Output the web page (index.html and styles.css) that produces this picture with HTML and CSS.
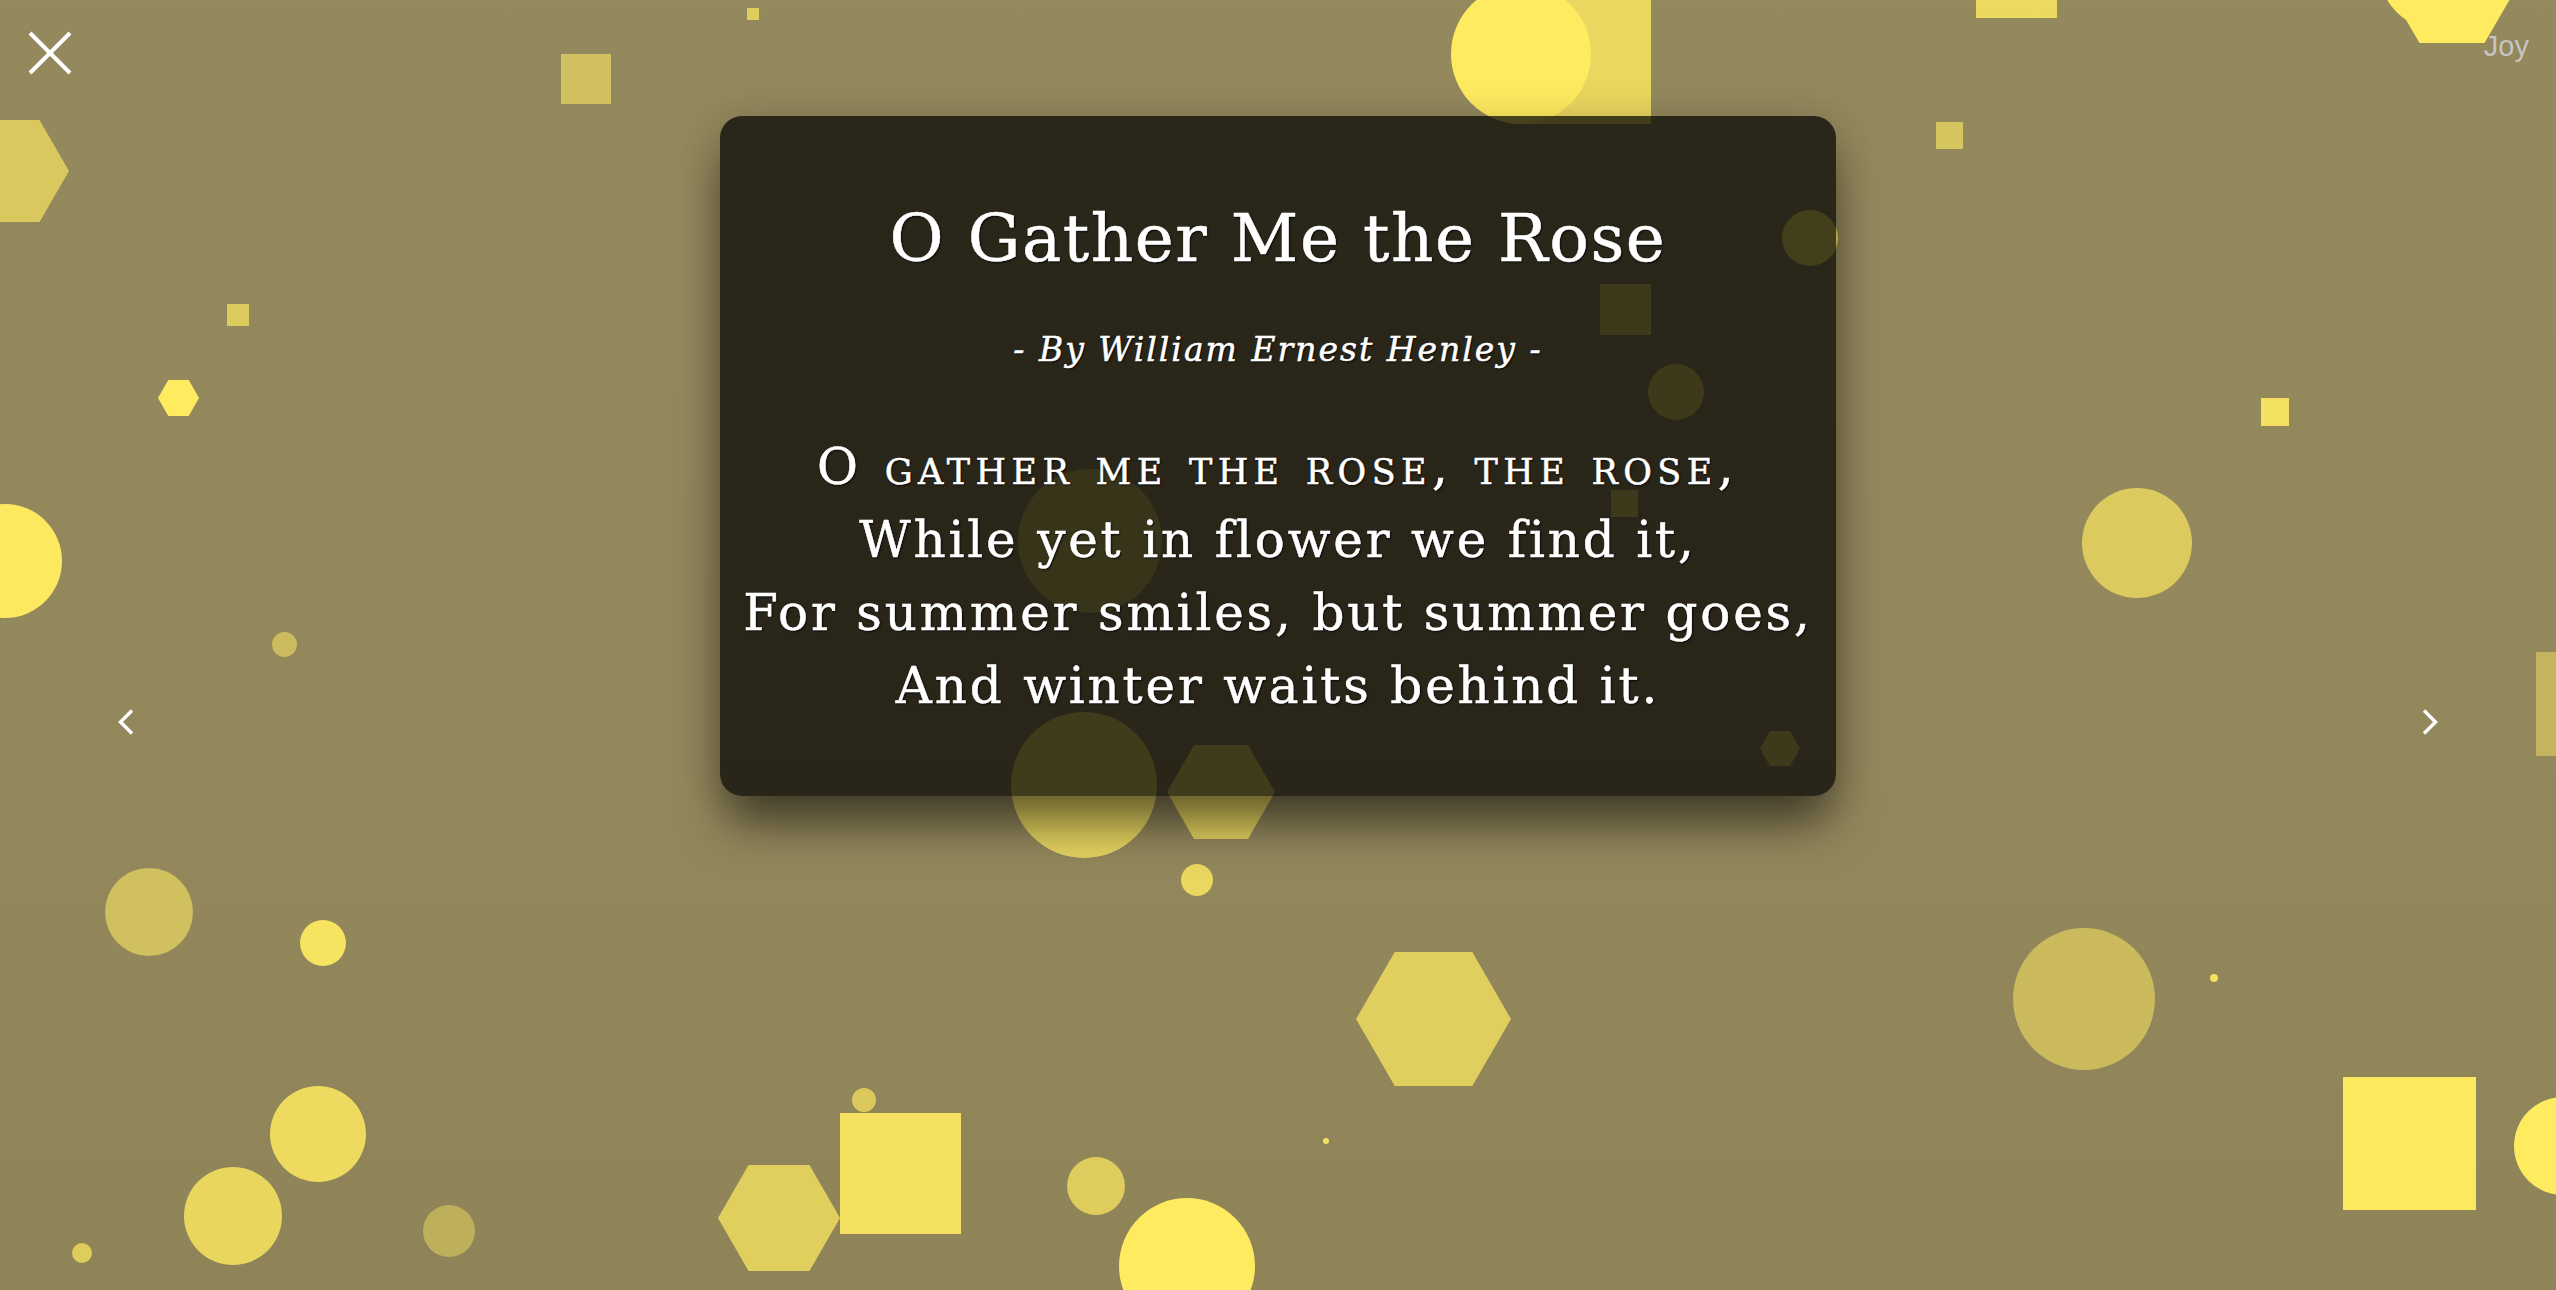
FILE: index.html
```html
<!DOCTYPE html>
<html lang="en">
<head>
<meta charset="utf-8">
<title>O Gather Me the Rose</title>
<link rel="stylesheet" href="styles.css">
</head>
<body>
<div class="stage">
  <div class="shapes" aria-hidden="true">
    <span class="shape circle c1"></span>
    <span class="shape circle c2"></span>
    <span class="shape circle c3"></span>
    <span class="shape circle c4"></span>
    <span class="shape circle c5"></span>
    <span class="shape circle c6"></span>
    <span class="shape circle c7"></span>
    <span class="shape circle c8"></span>
    <span class="shape circle c9"></span>
    <span class="shape circle c10"></span>
    <span class="shape circle c11"></span>
    <span class="shape circle c12"></span>
    <span class="shape circle c13"></span>
    <span class="shape circle c14"></span>
    <span class="shape circle c15"></span>
    <span class="shape circle c16"></span>
    <span class="shape circle c17"></span>
    <span class="shape circle c18"></span>
    <span class="shape circle c19"></span>
    <span class="shape circle c20"></span>
    <span class="shape circle c21"></span>
    <span class="shape circle c22"></span>
    <span class="shape circle c23"></span>
    <span class="shape square q1"></span>
    <span class="shape square q2"></span>
    <span class="shape square q3"></span>
    <span class="shape square q4"></span>
    <span class="shape square q5"></span>
    <span class="shape square q6"></span>
    <span class="shape square q7"></span>
    <span class="shape square q8"></span>
    <span class="shape square q9"></span>
    <span class="shape square q10"></span>
    <span class="shape square q11"></span>
    <span class="shape square q12"></span>
    <span class="shape hex h1"></span>
    <span class="shape hex h2"></span>
    <span class="shape hex h3"></span>
    <span class="shape hex h4"></span>
    <span class="shape hex h5"></span>
    <span class="shape hex h6"></span>
    <span class="shape hex h7"></span>
  </div>

  <button class="close" aria-label="Close">
    <svg width="44" height="44" viewBox="0 0 44 44"><path d="M2 2 L42 42 M42 2 L2 42" stroke="#fff" stroke-width="4" fill="none"/></svg>
  </button>
  <div class="mood">Joy</div>
  <button class="nav prev" aria-label="Previous">
    <svg width="18" height="26" viewBox="0 0 18 26"><path d="M15 1.5 L3.5 13 L15 24.5" stroke="#fff" stroke-width="3.4" fill="none"/></svg>
  </button>
  <button class="nav next" aria-label="Next">
    <svg width="18" height="26" viewBox="0 0 18 26"><path d="M3 1.5 L14.5 13 L3 24.5" stroke="#fff" stroke-width="3.4" fill="none"/></svg>
  </button>

  <main class="content">
    <article class="card">
      <h1 class="title">O Gather Me the Rose</h1>
      <p class="author">- By William Ernest Henley -</p>
      <div class="poem">
        <p class="line first">O gather me the rose, the rose,</p>
        <p class="line">While yet in flower we find it,</p>
        <p class="line">For summer smiles, but summer goes,</p>
        <p class="line">And winter waits behind it.</p>
      </div>
    </article>
  </main>
</div>
</body>
</html>
```

FILE: styles.css
```css
html, body {
  margin: 0;
  padding: 0;
  width: 100%;
  height: 100%;
  overflow: hidden;
}

body {
  font-family: "DejaVu Serif", serif;
  background: #93875c;
}

.stage {
  position: relative;
  width: 100%;
  height: 100vh;
  overflow: hidden;
  background: linear-gradient(180deg, #94885d 0%, #93875c 60%, #8f8358 100%);
}

/* ---------- background shapes (free canvas) ---------- */
.shapes {
  position: absolute;
  inset: 0;
}
.shape {
  position: absolute;
  display: block;
  background: #ffeb60;
}
.circle { border-radius: 50%; }
.hex { clip-path: polygon(25% 0, 75% 0, 100% 50%, 75% 100%, 25% 100%, 0 50%); }

.c1  { left: -52px;  top: 504px;  width: 114px; height: 114px; opacity: .98; }
.c2  { left: 272px;  top: 632px;  width: 25px;  height: 25px;  opacity: .52; }
.c3  { left: 105px;  top: 868px;  width: 88px;  height: 88px;  opacity: .57; }
.c4  { left: 300px;  top: 920px;  width: 46px;  height: 46px;  opacity: .92; }
.c5  { left: 270px;  top: 1086px; width: 96px;  height: 96px;  opacity: .84; }
.c6  { left: 184px;  top: 1167px; width: 98px;  height: 98px;  opacity: .8; }
.c7  { left: 423px;  top: 1205px; width: 52px;  height: 52px;  opacity: .42; }
.c8  { left: 72px;   top: 1243px; width: 20px;  height: 20px;  opacity: .7; }
.c9  { left: 852px;  top: 1088px; width: 24px;  height: 24px;  opacity: .68; }
.c10 { left: 1067px; top: 1157px; width: 58px;  height: 58px;  opacity: .7; }
.c11 { left: 1119px; top: 1198px; width: 136px; height: 136px; opacity: 1; }
.c12 { left: 1181px; top: 864px;  width: 32px;  height: 32px;  opacity: .8; }
.c13 { left: 1011px; top: 712px;  width: 146px; height: 146px; opacity: .75; }
.c14 { left: 1018px; top: 469px;  width: 144px; height: 144px; opacity: .5; }
.c15 { left: 1782px; top: 210px;  width: 56px;  height: 56px;  opacity: .9; }
.c16 { left: 1648px; top: 364px;  width: 56px;  height: 56px;  opacity: .7; }
.c17 { left: 1451px; top: -16px;  width: 140px; height: 140px; opacity: 1; }
.c18 { left: 2378px; top: -97px;  width: 128px; height: 128px; opacity: 1; }
.c19 { left: 2082px; top: 488px;  width: 110px; height: 110px; opacity: .68; }
.c20 { left: 2013px; top: 928px;  width: 142px; height: 142px; opacity: .52; }
.c21 { left: 2210px; top: 974px;  width: 8px;   height: 8px;   opacity: .9; }
.c22 { left: 1323px; top: 1138px; width: 6px;   height: 6px;   opacity: .9; }
.c23 { left: 2514px; top: 1097px; width: 98px;  height: 98px;  opacity: 1; }

.q1  { left: 561px;  top: 54px;   width: 50px;  height: 50px;  opacity: .57; }
.q2  { left: 747px;  top: 8px;    width: 12px;  height: 12px;  opacity: .7; }
.q3  { left: 227px;  top: 304px;  width: 22px;  height: 22px;  opacity: .68; }
.q4  { left: 1513px; top: -14px;  width: 138px; height: 138px; opacity: .8; }
.q5  { left: 1976px; top: -63px;  width: 81px;  height: 81px;  opacity: .82; }
.q6  { left: 1936px; top: 122px;  width: 27px;  height: 27px;  opacity: .62; }
.q7  { left: 2261px; top: 398px;  width: 28px;  height: 28px;  opacity: .9; }
.q8  { left: 2536px; top: 652px;  width: 104px; height: 104px; opacity: .45; }
.q9  { left: 840px;  top: 1113px; width: 121px; height: 121px; opacity: .9; }
.q10 { left: 2343px; top: 1077px; width: 133px; height: 133px; opacity: .98; }
.q11 { left: 1600px; top: 284px;  width: 51px;  height: 51px;  opacity: .7; }
.q12 { left: 1611px; top: 490px;  width: 27px;  height: 27px;  opacity: .7; }

.h1 { left: -49px;   top: 120px;  width: 118px; height: 102px; opacity: .65; }
.h2 { left: 158px;   top: 380px;  width: 41px;  height: 36px;  opacity: 1; }
.h3 { left: 718px;   top: 1165px; width: 122px; height: 106px; opacity: .72; }
.h4 { left: 1167px;  top: 745px;  width: 108px; height: 94px;  opacity: .75; }
.h5 { left: 1356px;  top: 952px;  width: 155px; height: 134px; opacity: .72; }
.h6 { left: 1760px;  top: 731px;  width: 40px;  height: 35px;  opacity: .7; }
.h7 { left: 2387px;  top: -69px;  width: 130px; height: 112px; opacity: 1; }

/* ---------- overlay controls ---------- */
.close, .nav {
  position: absolute;
  padding: 0;
  margin: 0;
  border: 0;
  background: none;
  cursor: pointer;
  line-height: 0;
}
.close { left: 28px; top: 31px; }
.close svg, .nav svg { display: block; }
.nav { top: 709px; }
.prev { left: 117px; }
.next { left: 2421px; }

.mood {
  position: absolute;
  right: 27px;
  top: 29px;
  font-family: "Liberation Sans", Arial, sans-serif;
  font-size: 29px;
  line-height: 34px;
  color: #c6c4c4;
}

/* ---------- poem card ---------- */
.content {
  position: relative;
  display: flex;
  justify-content: center;
  padding-top: 116px;
}

.card {
  box-sizing: border-box;
  width: 1116px;
  height: 680px;
  padding: 85px 12px 0;
  border-radius: 22px;
  background: rgba(0, 0, 0, 0.72);
  box-shadow: 0 32px 48px -6px rgba(0, 0, 0, 0.55), 0 0 40px rgba(0, 0, 0, 0.12);
  color: #fff;
  text-align: center;
  text-shadow: 1px 1px 2px rgba(0, 0, 0, 0.95);
  -webkit-text-stroke: 0.5px #fff;
}

.title {
  margin: 0;
  font-family: "DejaVu Serif", serif;
  font-weight: normal;
  font-size: 66px;
  line-height: 76px;
  letter-spacing: 1.5px;
}

.author {
  margin: 53px 0 0;
  font-family: "DejaVu Serif", serif;
  font-style: italic;
  font-size: 33px;
  line-height: 40px;
  letter-spacing: 2px;
}

.poem {
  margin-top: 61px;
}

.line {
  margin: 0;
  font-family: "DejaVu Serif", serif;
  font-size: 50px;
  line-height: 73px;
  letter-spacing: 2.8px;
  white-space: nowrap;
}

.line.first::first-line {
  font-variant: small-caps;
  letter-spacing: 5.4px;
}
```
